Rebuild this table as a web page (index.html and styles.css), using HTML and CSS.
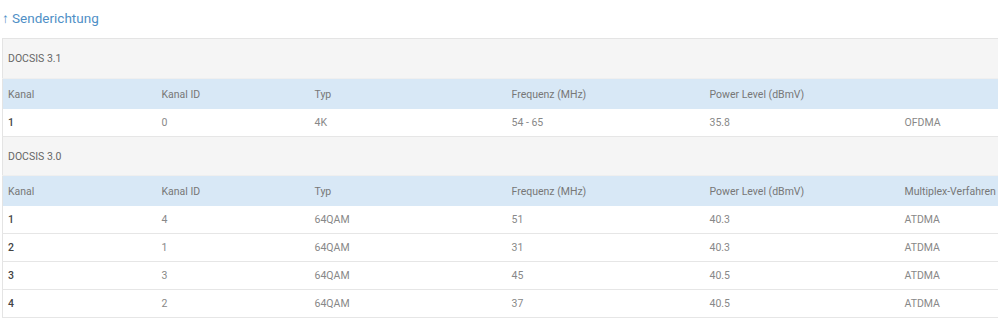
FILE: index.html
```html
<!DOCTYPE html>
<html lang="de">
<head>
<meta charset="utf-8">
<link rel="stylesheet" href="styles.css">
</head>
<body>
<h2 class="title">↑ Senderichtung</h2>
<table class="grid">
  <colgroup>
    <col class="c1"><col class="c2"><col class="c3"><col class="c4"><col class="c5"><col>
  </colgroup>
  <tbody>
    <tr class="section"><td colspan="6">DOCSIS 3.1</td></tr>
    <tr class="head"><td>Kanal</td><td>Kanal ID</td><td>Typ</td><td>Frequenz (MHz)</td><td>Power Level (dBmV)</td><td></td></tr>
    <tr class="row"><td class="num">1</td><td>0</td><td>4K</td><td>54 - 65</td><td>35.8</td><td>OFDMA</td></tr>
    <tr class="section"><td colspan="6">DOCSIS 3.0</td></tr>
    <tr class="head"><td>Kanal</td><td>Kanal ID</td><td>Typ</td><td>Frequenz (MHz)</td><td>Power Level (dBmV)</td><td>Multiplex-Verfahren</td></tr>
    <tr class="row"><td class="num">1</td><td>4</td><td>64QAM</td><td>51</td><td>40.3</td><td>ATDMA</td></tr>
    <tr class="row"><td class="num">2</td><td>1</td><td>64QAM</td><td>31</td><td>40.3</td><td>ATDMA</td></tr>
    <tr class="row"><td class="num">3</td><td>3</td><td>64QAM</td><td>45</td><td>40.5</td><td>ATDMA</td></tr>
    <tr class="row"><td class="num">4</td><td>2</td><td>64QAM</td><td>37</td><td>40.5</td><td>ATDMA</td></tr>
  </tbody>
</table>
</body>
</html>
```
FILE: styles.css
```css
html, body {
  margin: 0;
  padding: 0;
  background: #fff;
  font-family: Roboto, "Liberation Sans", sans-serif;
  color: #777;
}
.title {
  margin: 0;
  padding: 9px 0 0 2px;
  height: 38px;
  box-sizing: border-box;
  font-size: 13.5px;
  font-weight: normal;
  color: #4f8fc6;
  line-height: 18px;
}
.grid {
  margin-left: 2px;
  width: 1010px;
  border-collapse: collapse;
  table-layout: fixed;
  border-top: 1px solid #e4e4e4;
  border-left: 1px solid #e4e4e4;
  font-size: 10.5px;
}
.c1 { width: 154px; }
.c2 { width: 153px; }
.c3 { width: 197px; }
.c4 { width: 198px; }
.c5 { width: 195px; }
.grid td {
  padding: 0 0 0 5px;
  white-space: nowrap;
  text-align: left;
}
.section td {
  height: 38px;
  background: #f5f5f5;
  color: #666;
  border-bottom: 1px solid #efefef;
}
.section:first-child td { height: 39px; }
.head td {
  height: 30px;
  background: #d8e8f6;
  color: #777;
}
.row td {
  height: 27px;
  background: #fff;
  color: #888;
  border-bottom: 1px solid #e6e6e6;
}
.row td.num {
  color: #444;
  font-weight: 500;
}
```
